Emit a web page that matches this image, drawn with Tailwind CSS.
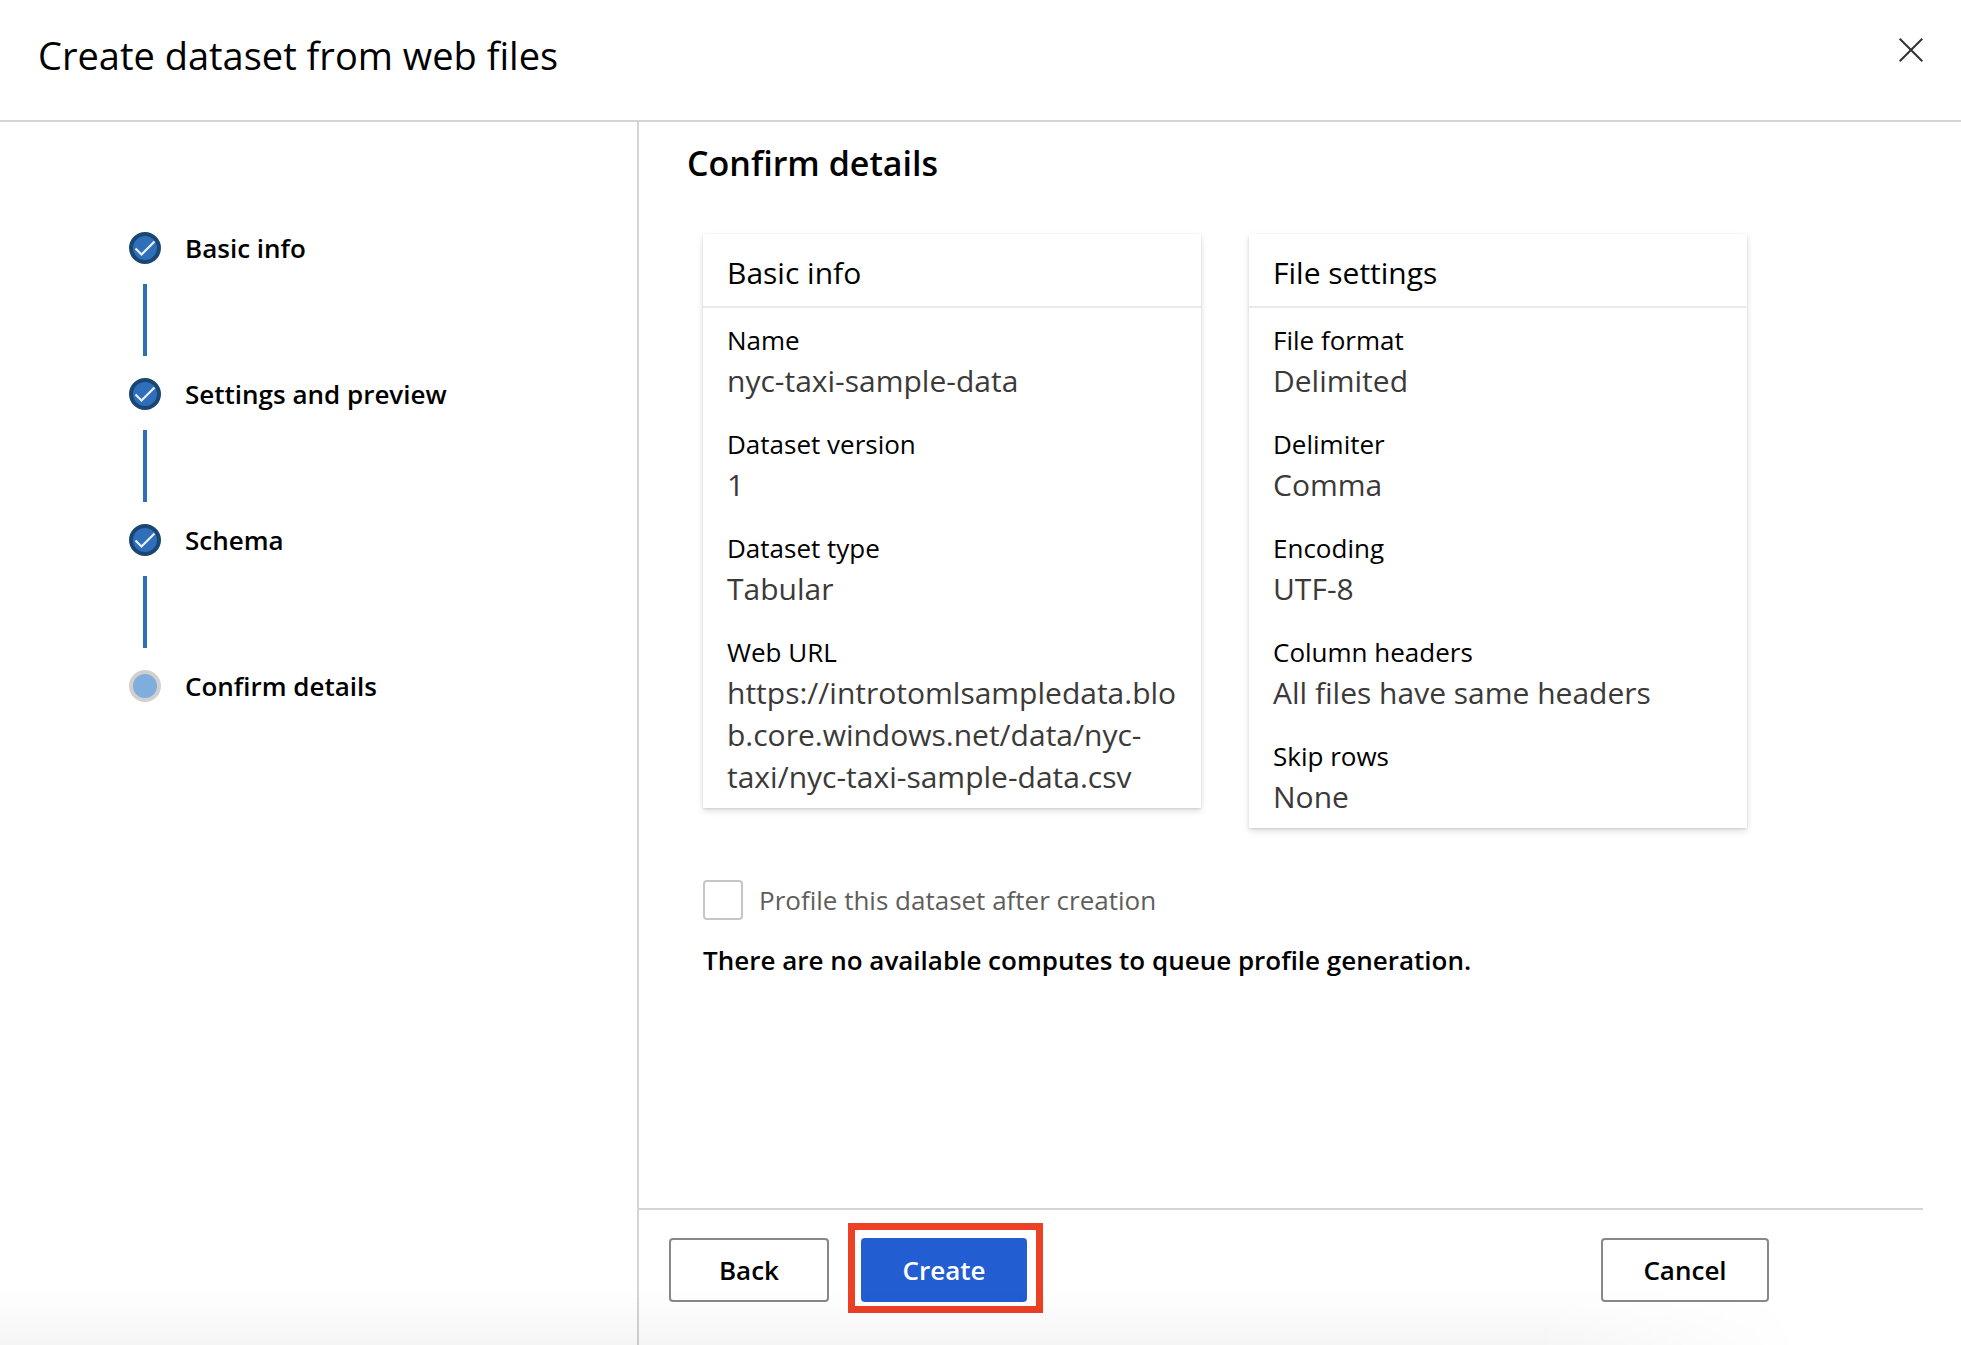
<!DOCTYPE html>
<html lang="en">
<head>
<meta charset="utf-8">
<meta name="viewport" content="width=device-width, initial-scale=1">
<title>Create dataset from web files</title>
<script src="https://cdn.jsdelivr.net/npm/@tailwindcss/browser@4"></script>
</head>
<body class="relative flex min-h-screen flex-col bg-white font-['Open_Sans','Noto_Sans',sans-serif] text-[26px] leading-[40px] text-black">
  <header class="flex items-start justify-between border-b-2 border-[#d4d4d4] pt-8 pr-[38px] pb-[42px] pl-[38px]">
    <h1 class="text-[38px] leading-[46px]">Create dataset from web files</h1>
    <button type="button" aria-label="Close" class="mt-1.5 size-6">
      <svg viewBox="0 0 24 24" class="size-6" fill="none" stroke="#323130" stroke-width="2" aria-hidden="true"><path d="M.7.7l22.6 22.6M23.3.7L.7 23.3"/></svg>
    </button>
  </header>

  <div class="flex grow">
    <nav aria-label="Progress" class="w-[639px] shrink-0 border-r-2 border-[#d4d4d4] pt-[110px] pl-[129px]">
      <ol class="font-semibold">
        <li>
          <div class="flex h-8 items-center gap-6">
            <svg viewBox="0 0 32 32" class="size-8" fill="none" aria-hidden="true"><circle cx="16" cy="16" r="14" fill="#2f6fba" stroke="#1a4673" stroke-width="4"/><path d="M6.5 16.5l6 6L25.5 9.500" stroke="#e8f0fa" stroke-width="2.200"/></svg>
            <span>Basic info</span>
          </div>
          <div class="mt-5 mb-[22px] ml-3.5 h-[72px] w-1 bg-[#2f6fba]"></div>
        </li>
        <li>
          <div class="flex h-8 items-center gap-6">
            <svg viewBox="0 0 32 32" class="size-8" fill="none" aria-hidden="true"><circle cx="16" cy="16" r="14" fill="#2f6fba" stroke="#1a4673" stroke-width="4"/><path d="M6.5 16.5l6 6L25.5 9.500" stroke="#e8f0fa" stroke-width="2.200"/></svg>
            <span>Settings and preview</span>
          </div>
          <div class="mt-5 mb-[22px] ml-3.5 h-[72px] w-1 bg-[#2f6fba]"></div>
        </li>
        <li>
          <div class="flex h-8 items-center gap-6">
            <svg viewBox="0 0 32 32" class="size-8" fill="none" aria-hidden="true"><circle cx="16" cy="16" r="14" fill="#2f6fba" stroke="#1a4673" stroke-width="4"/><path d="M6.5 16.5l6 6L25.5 9.500" stroke="#e8f0fa" stroke-width="2.200"/></svg>
            <span>Schema</span>
          </div>
          <div class="mt-5 mb-[22px] ml-3.5 h-[72px] w-1 bg-[#2f6fba]"></div>
        </li>
        <li aria-current="step" class="flex h-8 items-center gap-6">
          <span class="size-8 rounded-full border-4 border-[#d2d0ce] bg-[#7fadde]"></span>
          <span>Confirm details</span>
        </li>
      </ol>
    </nav>

    <div class="flex min-w-0 grow flex-col">
      <main class="grow pt-5 pr-12 pl-12">
        <h2 class="text-[34px] leading-[42px] font-semibold">Confirm details</h2>

        <div class="mt-[50px] ml-4 grid max-w-[1044px] grid-cols-2 items-start gap-12">
          <section class="bg-white shadow-[0_3px_7px_rgba(0,0,0,0.13),0_1px_2px_rgba(0,0,0,0.11)]">
            <h3 class="border-b-2 border-[#eaeaea] px-6 pt-[17px] pb-[11px] text-[30px] leading-[44px]">Basic info</h3>
            <dl class="flex flex-col gap-[22px] px-6 pt-3 pb-2.5">
              <div><dt>Name</dt><dd class="text-[30px] leading-[42px] text-[#3b3a39]">nyc-taxi-sample-data</dd></div>
              <div><dt>Dataset version</dt><dd class="text-[30px] leading-[42px] text-[#3b3a39]">1</dd></div>
              <div><dt>Dataset type</dt><dd class="text-[30px] leading-[42px] text-[#3b3a39]">Tabular</dd></div>
              <div><dt>Web URL</dt><dd class="text-[30px] leading-[42px] wrap-break-word text-[#3b3a39]">https://introtomlsampledata.blob.core.windows.net/data/nyc-taxi/nyc-taxi-sample-data.csv</dd></div>
            </dl>
          </section>
          <section class="bg-white shadow-[0_3px_7px_rgba(0,0,0,0.13),0_1px_2px_rgba(0,0,0,0.11)]">
            <h3 class="border-b-2 border-[#eaeaea] px-6 pt-[17px] pb-[11px] text-[30px] leading-[44px]">File settings</h3>
            <dl class="flex flex-col gap-[22px] px-6 pt-3 pb-2.5">
              <div><dt>File format</dt><dd class="text-[30px] leading-[42px] text-[#3b3a39]">Delimited</dd></div>
              <div><dt>Delimiter</dt><dd class="text-[30px] leading-[42px] text-[#3b3a39]">Comma</dd></div>
              <div><dt>Encoding</dt><dd class="text-[30px] leading-[42px] text-[#3b3a39]">UTF-8</dd></div>
              <div><dt>Column headers</dt><dd class="text-[30px] leading-[42px] text-[#3b3a39]">All files have same headers</dd></div>
              <div><dt>Skip rows</dt><dd class="text-[30px] leading-[42px] text-[#3b3a39]">None</dd></div>
            </dl>
          </section>
        </div>

        <label for="profile" class="mt-[52px] ml-4 flex items-center gap-4 text-[#605e5c]">
          <input id="profile" type="checkbox" disabled class="size-10 appearance-none rounded-sm border-2 border-[#c8c6c4] bg-white">
          Profile this dataset after creation
        </label>
        <p class="mt-5 ml-4 font-semibold">There are no available computes to queue profile generation.</p>
      </main>

      <footer class="mr-[38px] border-t-2 border-[#d4d4d4] pt-7 pb-[43px] pl-[30px]">
        <div class="flex max-w-[1100px] items-center font-semibold">
          <button type="button" class="h-16 w-40 rounded-sm border-2 border-[#8a8886] bg-white">Back</button>
          <div class="relative ml-8">
            <button type="button" class="h-16 w-[166px] rounded-sm bg-[#225dd2] text-white">Create</button>
            <span class="pointer-events-none absolute -top-[15px] -right-4 -bottom-[11px] -left-[13px] border-[7px] border-[#ec4125]"></span>
          </div>
          <button type="button" class="ml-auto h-16 w-[168px] rounded-sm border-2 border-[#8a8886] bg-white">Cancel</button>
        </div>
      </footer>
    </div>
  </div>

  <div class="pointer-events-none absolute bottom-0 left-0 h-14 w-[92%] bg-linear-to-b from-transparent to-black/4 mask-r-from-85%"></div>
</body>
</html>
